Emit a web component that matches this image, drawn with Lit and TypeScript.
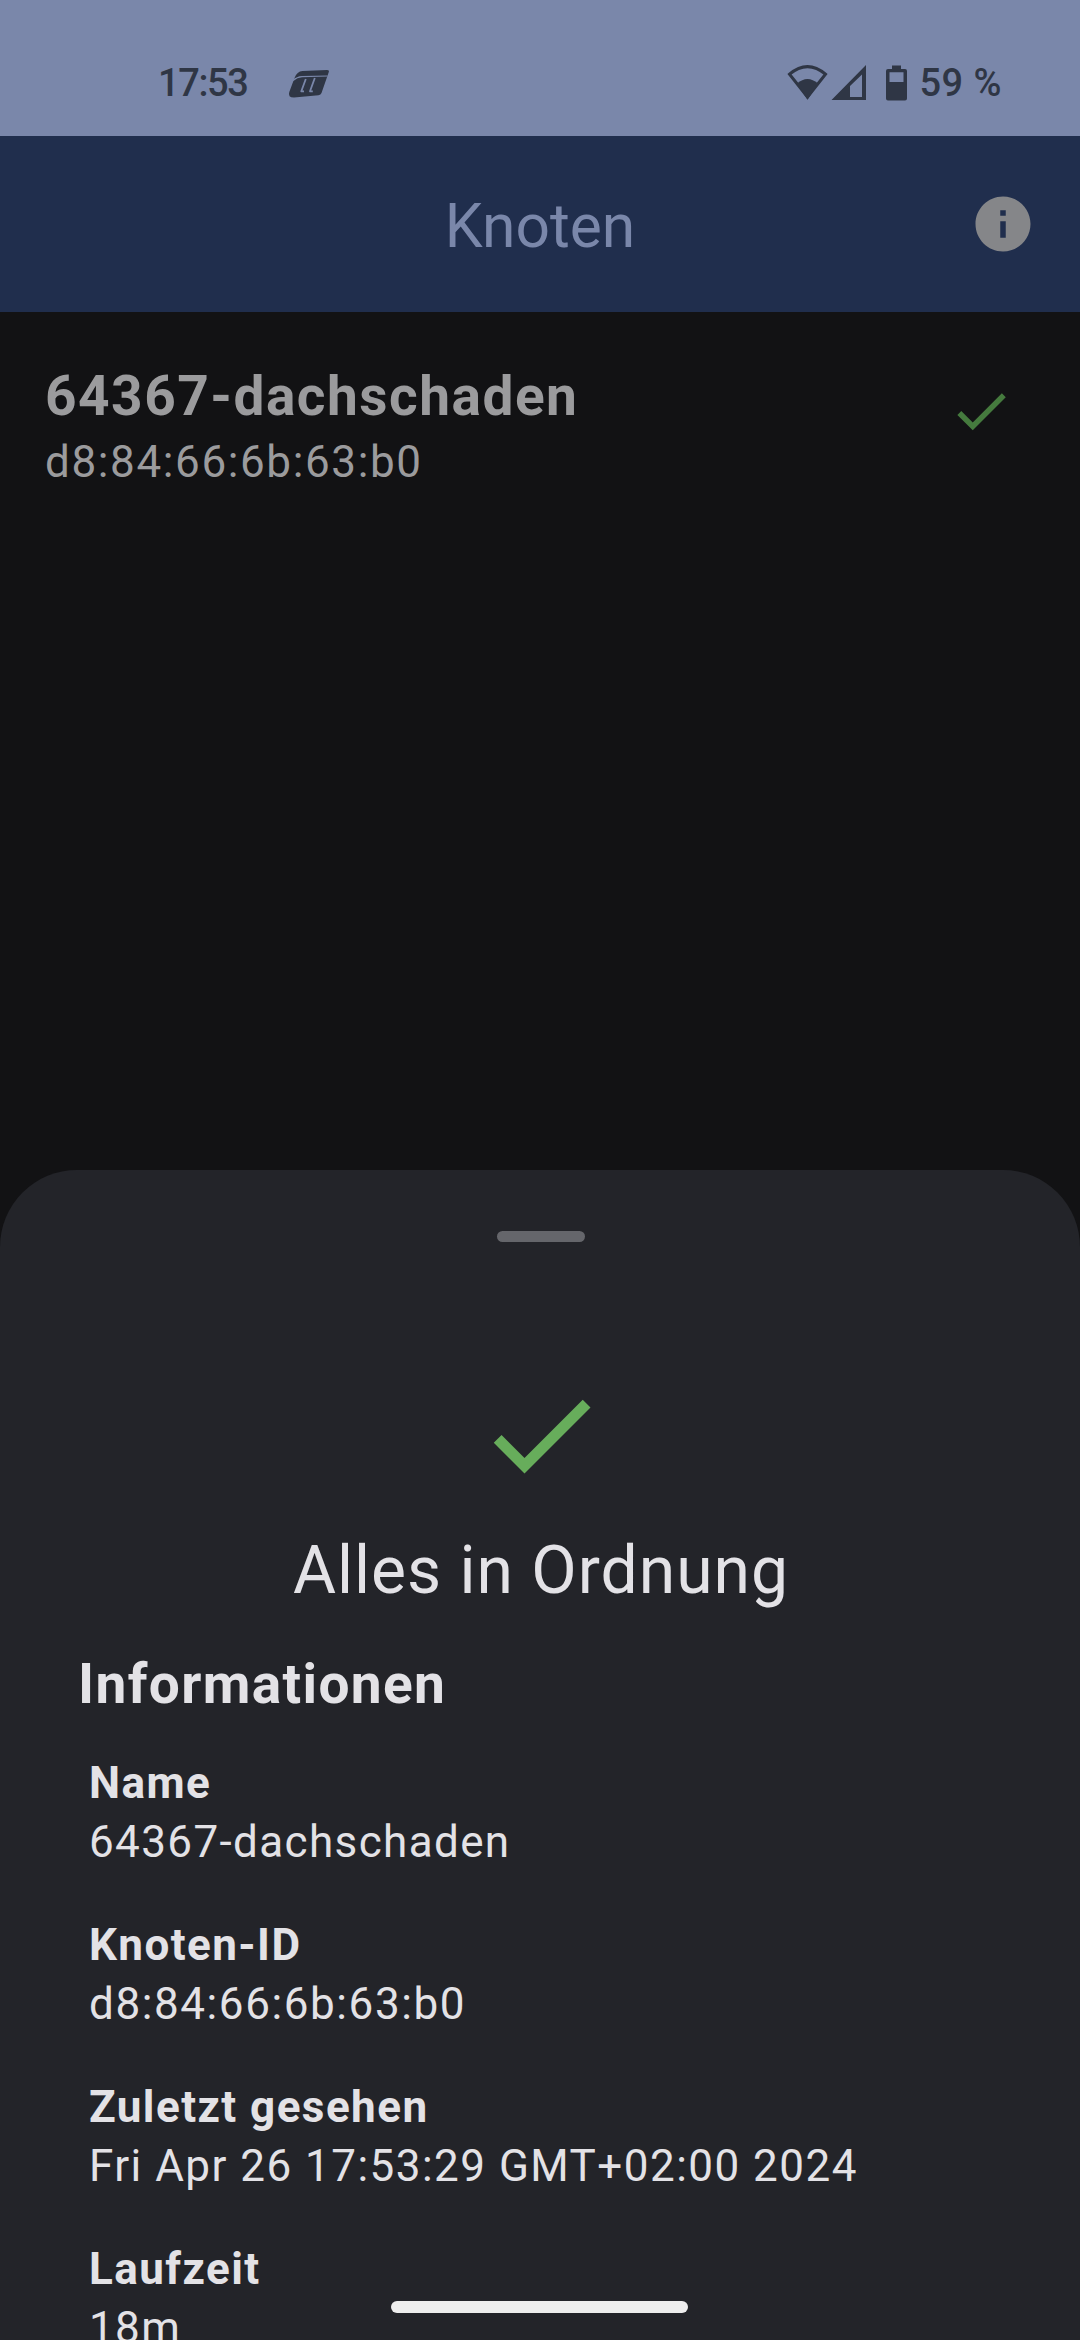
import { LitElement, html, css } from "lit";
import { customElement, property } from "lit/decorators.js";
import { classMap } from "lit/directives/class-map.js";

@customElement("check-icon")
class CheckIcon extends LitElement {
  static styles = css`
    :host { display: block; }
    svg { display: block; width: 100%; height: 100%; }
  `;
  render() {
    return html`<svg viewBox="0 0 24 24" fill="currentColor">
      <path d="M9 16.17 4.83 12l-1.42 1.41L9 19 21 7l-1.41-1.41z" />
    </svg>`;
  }
}

@customElement("status-bar")
class StatusBar extends LitElement {
  static styles = css`
    :host {
      display: flex; align-items: flex-start; box-sizing: border-box;
      height: 136px; padding: 60px 78px 0 158px;
      background: #7a87aa; color: #2f3645;
      font: 500 38px/46px Roboto, sans-serif;
    }
    svg { display: block; flex: none; height: 46px; }
    .time { width: 129px; white-space: nowrap; letter-spacing: -1.4px; }
    .logo { width: 46px; }
    .icons { width: 132px; margin-left: auto; }
    .battery { width: 84px; margin-left: 2px; white-space: nowrap; text-align: right; letter-spacing: 0.5px; }
  `;
  render() {
    return html`
      <span class="time">17:53</span>
      <svg class="logo" viewBox="287 60 46 46">
        <path fill="#2f3645" d="M302.5 71 L327 70 Q329.5 70 328.8 72 L321.5 93 Q320.8 95 318.5 95.2 L294 97.5 Q287.5 97.500 289.300 92 L294.500 78 Q297 71.300 302.500 71Z" />
        <path fill="none" stroke="#7a87aa" stroke-width="1.2" d="M293 80.500 Q297 77 302 76.700 L327.500 76" />
        <path fill="none" stroke="#7a87aa" stroke-width="1.8" stroke-linejoin="round" d="M305.800 79 L301.300 91.300 H304 M314.800 78 L310 91.300 H312.800" />
      </svg>
      <svg class="icons" viewBox="784 60 132 46">
        <path fill="none" stroke="#2f3645" stroke-width="3" d="M789.500 74.200 Q807.500 59 825.500 74.200 L807.500 97Z" />
        <path fill="#2f3645" d="M797 83.500 Q807.500 74.500 818 83.500 L807.500 99.800Z" />
        <path fill="#2f3645" fill-rule="evenodd" d="M831.500 100 L866 65 V100Z M850 82.500 V97 H862 V74.500 L850 86Z" />
        <path fill="#2f3645" fill-rule="evenodd" d="M892 65.500 H901 V69 H905 Q907 69 907 71 V98.500 Q907 100.500 905 100.500 H888 Q886 100.500 886 98.500 V71 Q886 69 888 69 H892Z M889.500 72.300 V82 H903.500 V72.300Z" />
      </svg>
      <span class="battery">59 %</span>
    `;
  }
}

@customElement("info-entry")
class InfoEntry extends LitElement {
  @property() label = "";
  @property() value = "";
  static styles = css`
    :host { display: block; font-size: 44px; line-height: 59px; letter-spacing: 1.375px; white-space: nowrap; }
    .label { font-weight: 700; letter-spacing: 1.45px; }
    .date { letter-spacing: 1.47px; }
    .address { letter-spacing: 1.59px; }
  `;
  render() {
    const colons = this.value.split(":").length - 1;
    const classes = { address: colons > 3, date: colons > 0 && colons <= 3 };
    return html`<div class="label">${this.label}</div><div class=${classMap(classes)}>${this.value}</div>`;
  }
}

@customElement("app-root")
class AppRoot extends LitElement {
  private entries = [
    ["Name", "64367-dachschaden"],
    ["Knoten-ID", "d8:84:66:6b:63:b0"],
    ["Zuletzt gesehen", "Fri Apr 26 17:53:29 GMT+02:00 2024"],
    ["Laufzeit", "18m"],
  ];

  static styles = css`
    :host {
      display: flex; flex-direction: column; position: relative;
      width: 1080px; height: 2340px; overflow: hidden;
      background: #121214; color: #e3e2e6;
      font-family: Roboto, sans-serif;
    }
    .header {
      display: grid; grid-template-columns: 1fr auto 1fr; align-items: center;
      height: 176px; flex: none; background: #202e4d;
    }
    .title { grid-column: 2; margin: 5px 0 0; font: 400 60.5px/72px Roboto, sans-serif; color: #7a87aa; }
    .info { width: 66px; height: 66px; justify-self: end; margin-right: 44px; color: #858689; }
    .node {
      display: flex; justify-content: space-between; flex: 1 1 0; align-items: flex-start;
      padding: 49px 66px 0 45px; color: #9b9b9d; letter-spacing: 1.375px;
    }
    .name { font-size: 55px; line-height: 71px; font-weight: 700; letter-spacing: 1.5px; }
    .mac { font-size: 44px; line-height: 60px; letter-spacing: 1.62px; }
    .small-check { width: 66px; height: 66px; margin-top: 17px; color: #457a3e; }
    .sheet {
      display: flex; flex-direction: column; flex: none; box-sizing: border-box;
      height: 1170px; padding: 61px 76px 0 78px; overflow: hidden;
      border-radius: 77px 77px 0 0; background: #232429;
    }
    .handle { width: 88px; height: 11px; flex: none; align-self: center; border-radius: 5.5px; background: #65666b; }
    .big-check { width: 132px; height: 132px; flex: none; align-self: center; margin-top: 127px; color: #67ad5b; }
    .state { margin: 26px 0 0; text-align: center; font-weight: 400; font-size: 66px; line-height: 88px; letter-spacing: 1px; }
    .section { margin: 32px 0 33px; font-weight: 700; font-size: 55px; line-height: 74px; letter-spacing: 1.375px; }
    .entries { display: flex; flex-direction: column; gap: 44px; padding-left: 11px; }
    .gesture { position: absolute; left: 391px; top: 2301px; width: 297px; height: 12px; border-radius: 6px; background: #eeeeee; }
  `;

  render() {
    return html`
      <status-bar></status-bar>
      <header class="header">
        <h1 class="title">Knoten</h1>
        <svg class="info" viewBox="0 0 24 24" fill="currentColor">
          <path d="M12 2C6.480 2 2 6.480 2 12s4.480 10 10 10 10-4.480 10-10S17.520 2 12 2zm1 15h-2v-6h2v6zm0-8h-2V7h2v2z" />
        </svg>
      </header>
      <main class="node">
        <div>
          <div class="name">64367-dachschaden</div>
          <div class="mac">d8:84:66:6b:63:b0</div>
        </div>
        <check-icon class="small-check"></check-icon>
      </main>
      <section class="sheet">
        <div class="handle"></div>
        <check-icon class="big-check"></check-icon>
        <h2 class="state">Alles in Ordnung</h2>
        <h3 class="section">Informationen</h3>
        <div class="entries">
          ${this.entries.map(([l, v]) => html`<info-entry .label=${l} .value=${v}></info-entry>`)}
        </div>
      </section>
      <div class="gesture"></div>
    `;
  }
}
